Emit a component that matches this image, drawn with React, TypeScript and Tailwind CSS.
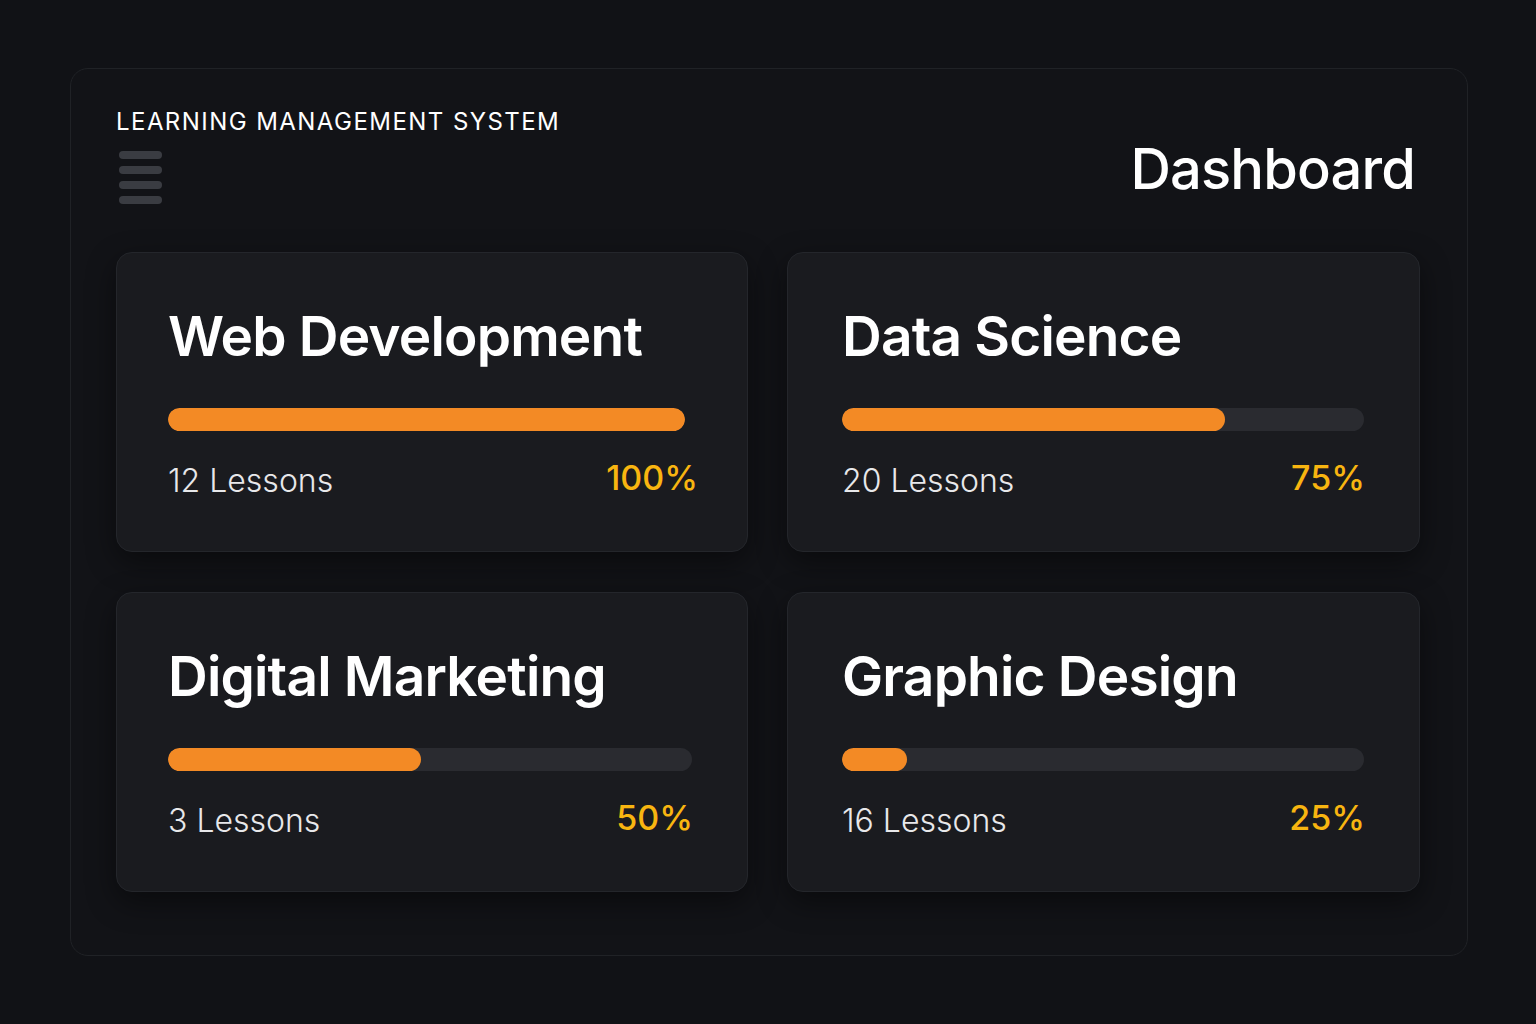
import React from "react";

const courses = [
  { title: "Web Development", lessons: "12 Lessons", pct: 100, fill: 517, track: 517 },
  { title: "Data Science", lessons: "20 Lessons", pct: 75, fill: 383, track: 522 },
  { title: "Digital Marketing", lessons: "3 Lessons", pct: 50, fill: 253, track: 524 },
  { title: "Graphic Design", lessons: "16 Lessons", pct: 25, fill: 65, track: 522 },
];

function Card({ c, idx }: { c: (typeof courses)[number]; idx: number }) {
  const left = idx % 2 === 0 ? "pl-[51px]" : "pl-[54px]";
  return (
    <div
      className={`h-[300px] rounded-[16px] border border-[#24262b] bg-[#1a1b1f] shadow-[0_10px_30px_rgba(0,0,0,0.45)] ${left} pt-[55px] flex flex-col`}
    >
      <div className="text-[55px] leading-[56px] font-semibold text-white tracking-[-0.015em]">{c.title}</div>
      <div
        className="mt-[44px] h-[23px] rounded-full bg-[#2a2b30] overflow-hidden"
        style={{ width: c.track }}
      >
        <div className="h-full rounded-full bg-[#f38a25]" style={{ width: c.fill }} />
      </div>
      <div className="mt-[30px] flex items-end justify-between" style={{ width: c.track + (idx === 0 ? 13 : 1) }}>
        <span className="text-[32px] leading-[40px] font-light text-[#e8e8ea]">{c.lessons}</span>
        <span className="text-[34px] leading-[40px] font-medium text-[#f8b510] -translate-y-[3px]">{c.pct}%</span>
      </div>
    </div>
  );
}

export default function App() {
  return (
    <div
      className="w-[1536px] h-[1024px] bg-[#111216] pt-[68px] pl-[70px]"
      style={{ fontFamily: "Inter, 'Noto Sans', sans-serif" }}
    >
      <div className="w-[1398px] h-[888px] rounded-[18px] border border-[#202226] bg-[#121317] px-[46px] pt-[38px]">
        <div className="flex justify-between">
          <div className="flex flex-col -ml-[1px]">
            <div className="text-[24px] leading-[30px] font-normal tracking-[0.06em] text-white">
              LEARNING MANAGEMENT SYSTEM
            </div>
            <div className="mt-[14px] ml-[3px] flex flex-col gap-[7px]">
              <div className="w-[43px] h-[8px] rounded-full bg-[#3a3c42]" />
              <div className="w-[43px] h-[8px] rounded-full bg-[#3a3c42]" />
              <div className="w-[43px] h-[8px] rounded-full bg-[#3a3c42]" />
              <div className="w-[43px] h-[8px] rounded-full bg-[#3a3c42]" />
            </div>
          </div>
          <div className="pt-[31px] pr-[6px] text-[56px] leading-[62px] font-medium text-white tracking-[-0.015em]">
            Dashboard
          </div>
        </div>
        <div className="mt-[48px] -ml-[1px] grid grid-cols-[632px_633px] gap-x-[39px] gap-y-[40px]">
          {courses.map((c, i) => (
            <Card key={c.title} c={c} idx={i} />
          ))}
        </div>
      </div>
    </div>
  );
}
